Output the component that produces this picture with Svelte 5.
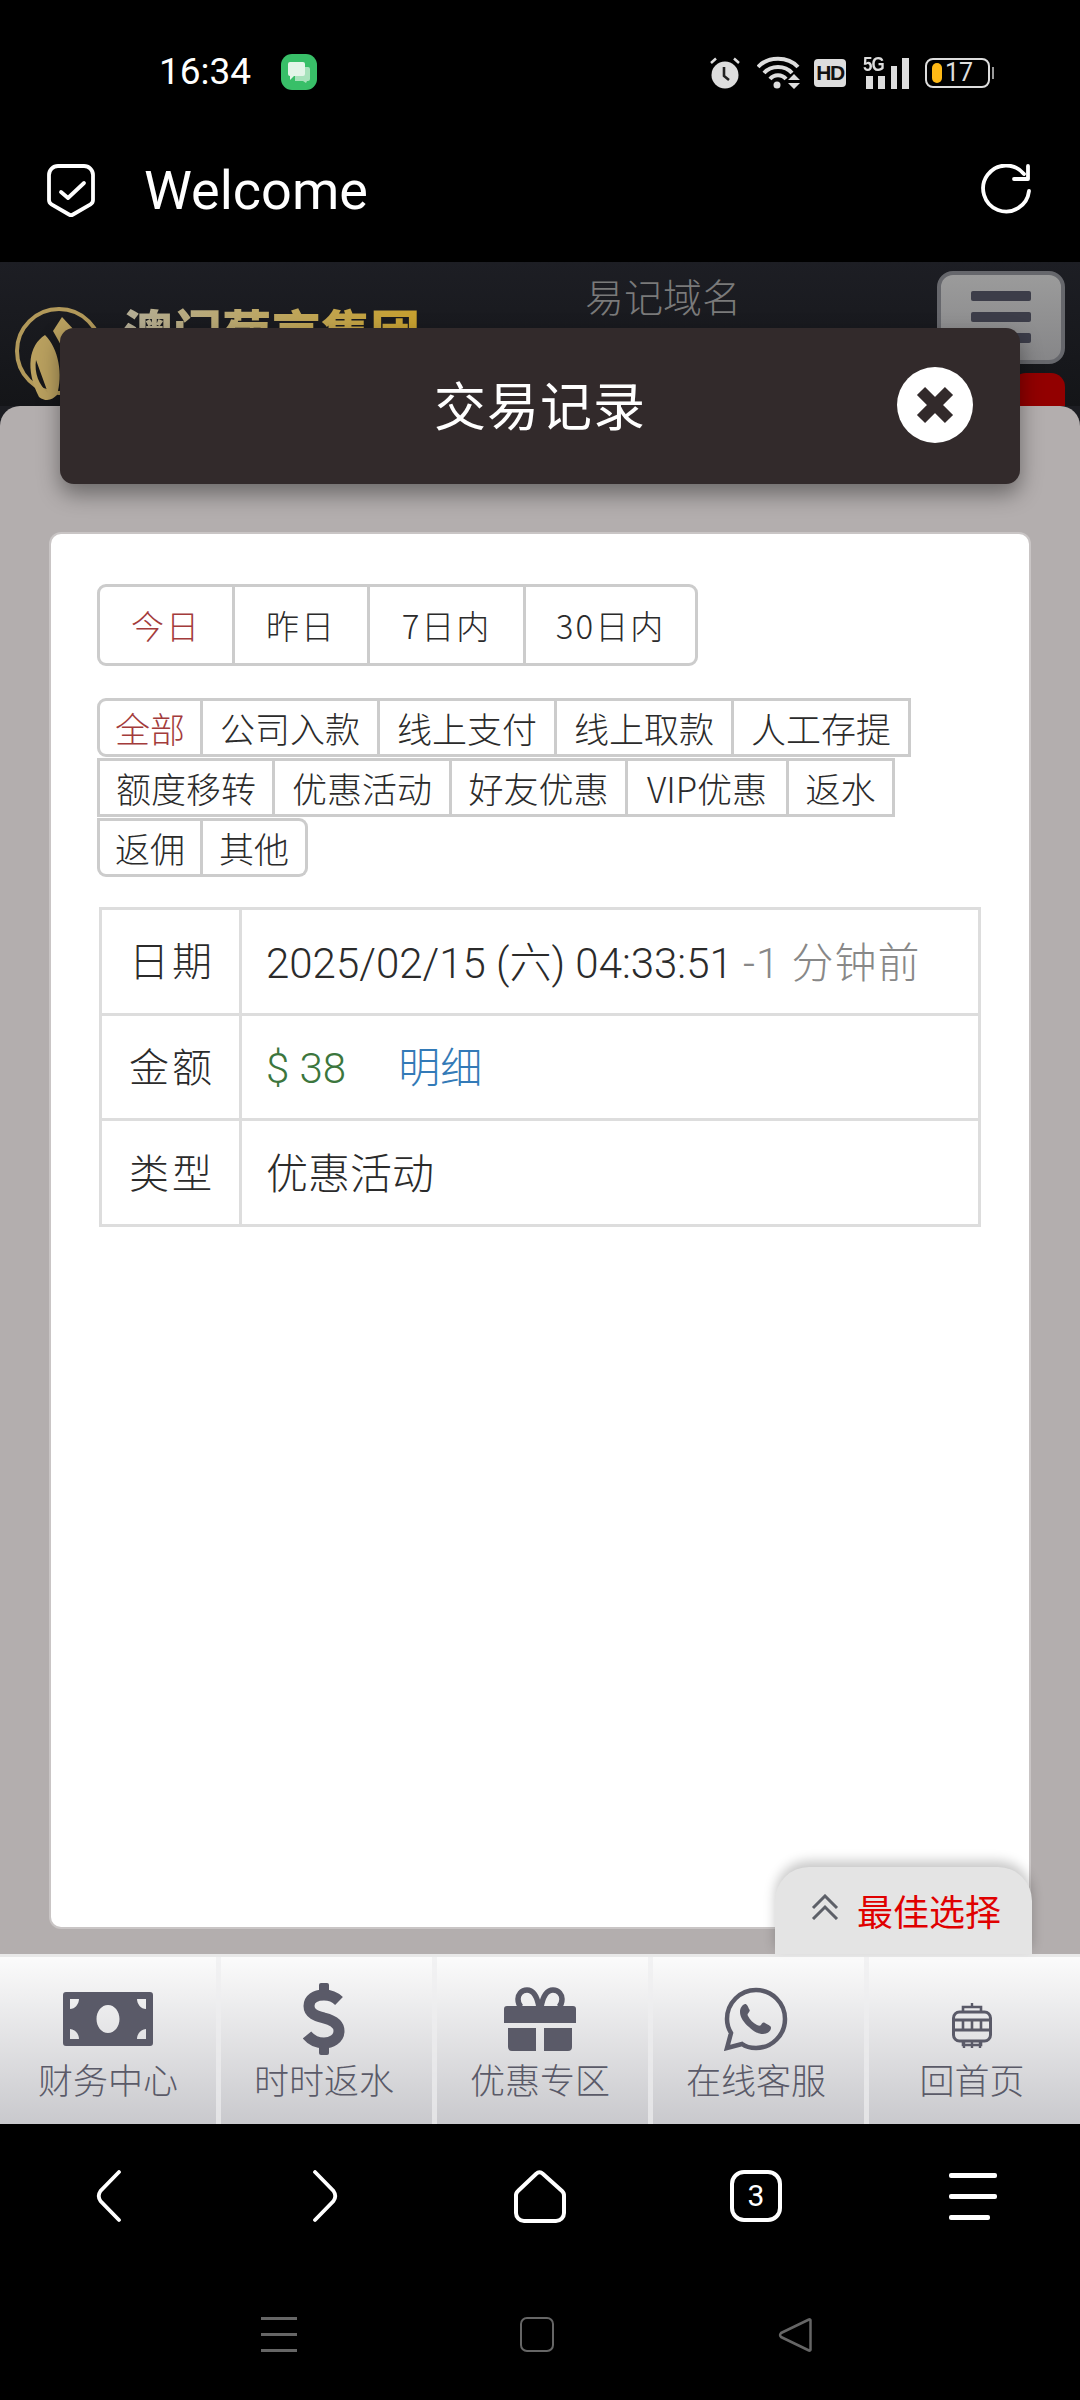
<script>
  const ranges = [
    { label: '今日', w: 132, active: true },
    { label: '昨日', w: 135 },
    { label: '7日内', w: 156 },
    { label: '30日内', w: 172 }
  ];
  const rows = [
    [['全部', 106, true], ['公司入款', 177], ['线上支付', 177], ['线上取款', 177], ['人工存提', 177]],
    [['额度移转', 178], ['优惠活动', 177], ['好友优惠', 176], ['VIP优惠', 161], ['返水', 106]],
    [['返佣', 106], ['其他', 105]]
  ];
  const nav = [
    { label: '财务中心', icon: 'money' },
    { label: '时时返水', icon: 'dollar' },
    { label: '优惠专区', icon: 'gift' },
    { label: '在线客服', icon: 'chat' },
    { label: '回首页', icon: 'lantern' }
  ];
</script>

<div class="screen">
  <div class="status">
    <span class="time">16:34</span>
    <svg class="msg" viewBox="0 0 36 36">
      <rect width="36" height="36" rx="11" fill="#38bf68" />
      <path d="M14 13h13a2 2 0 0 1 2 2v10a2 2 0 0 1-2 2h-1l-1 2-3-2h-8z" fill="#a7e2bb" />
      <path d="M9 8h13a2 2 0 0 1 2 2v10a2 2 0 0 1-2 2H13l-4 4v-4a2 2 0 0 1-2-2V10a2 2 0 0 1 2-2z" fill="#e3f5e8" />
    </svg>
    <div class="status-right">
      <svg class="s-alarm" viewBox="0 0 30 33">
        <circle cx="15" cy="19" r="13.5" fill="#ddd" />
        <path d="M14 11v9l5 4" fill="none" stroke="#222" stroke-width="2.6" />
        <path d="M1 7 6 2.500M29 7 24 2.500" stroke="#ddd" stroke-width="2.500" />
      </svg>
      <svg class="s-wifi" viewBox="0 0 44 33">
        <path d="M1 11C11 0 31 0 41 11M7 17C14 9 28 9 35 17M13 23C17 18 25 18 29 23" fill="none" stroke="#ddd" stroke-width="4" />
        <circle cx="20" cy="29" r="3.500" fill="#ddd" />
        <path d="M31 24h12l-6-6zM31 27h12l-6 6z" fill="#ddd" />
      </svg>
      <span class="s-hd">HD</span>
      <div class="s-signal">
        <span class="s-5g">5G</span>
        <svg viewBox="0 0 47 33">
          <path d="M3 20h7v13H3zM15 20h7v13h-7zM28 10h6v23h-6zM39 2h7v31h-7z" fill="#ddd" />
        </svg>
      </div>
      <div class="s-batt"><i></i><span>17</span></div>
      <b class="s-nub"></b>
    </div>
  </div>

  <div class="titlebar">
    <svg class="shield" viewBox="0 0 50 55">
      <path d="M12 3h26a9 9 0 0 1 9 9v25a5 5 0 0 1-2.500 4.300L27 51.500a4 4 0 0 1-4 0L5.500 41.300A5 5 0 0 1 3 37V12a9 9 0 0 1 9-9z" fill="none" stroke="#fff" stroke-width="3.800" />
      <path d="m15 29 7 6 16-15" fill="none" stroke="#fff" stroke-width="3.800" stroke-linecap="round" stroke-linejoin="round" />
    </svg>
    <span class="welcome">Welcome</span>
    <svg class="refresh" viewBox="0 0 50 50">
      <path d="M43 10A23 23 0 1 0 48 27" fill="none" stroke="#fff" stroke-width="3.800" stroke-linecap="round" />
      <path d="M33 15 47 15 47 2" fill="none" stroke="#fff" stroke-width="3.800" stroke-linecap="round" stroke-linejoin="round" />
    </svg>
  </div>

  <div class="web">
    <div class="site-head">
      <div class="logo">
        <svg class="logo-mark" viewBox="0 0 88 99">
          <circle cx="44" cy="44" r="42" fill="none" stroke="#b2995a" stroke-width="4" />
          <path d="M47 10 60 24 47 40 38 24z" fill="#b9a05f" />
          <path fill-rule="evenodd" d="M30 28C14 38 10 62 24 90 32 96 38 92 42 88 48 68 44 42 30 28zM21 53 33 86C24 78 19 66 21 53z" fill="#b9a05f" />
        </svg>
        <span class="logo-text">澳门葡京集团</span>
      </div>
      <div class="head-title">易记域名</div>
      <div class="head-right">
        <div class="burger"><i></i><i></i><i></i></div>
        <div class="red"></div>
      </div>
    </div>

    <div class="sheet">
      <div class="modal-head">
        <h1>交易记录</h1>
        <button class="close" aria-label="关闭">
          <svg viewBox="0 0 40 40">
            <path d="M6 6 34 34M34 6 6 34" stroke="#322a2b" stroke-width="11.500" />
          </svg>
        </button>
      </div>

      <div class="card">
        <div class="ranges">
          {#each ranges as r}
            <span class="range" class:on={r.active} style="width:{r.w}px">{r.label}</span>
          {/each}
        </div>

        <div class="types">
          {#each rows as row, i}
            <div class="type-row" class:first={i === 0} class:last={i === rows.length - 1}>
              {#each row as c}
                <span class="type" class:on={c[2]} style="width:{c[1]}px">{c[0]}</span>
              {/each}
            </div>
          {/each}
        </div>

        <table>
          <tbody>
            <tr>
              <th>日期</th>
              <td>2025/02/15 (六) 04:33:51 <span class="ago">-1 分钟前</span></td>
            </tr>
            <tr>
              <th>金额</th>
              <td><span class="amount">$ 38</span><a href="#detail" class="detail">明细</a></td>
            </tr>
            <tr>
              <th>类型</th>
              <td>优惠活动</td>
            </tr>
          </tbody>
        </table>
      </div>

      <div class="best">
        <svg viewBox="0 0 28 26">
          <path d="M2 14 14 2l12 12M2 25 14 13l12 12" fill="none" stroke="#5d6068" stroke-width="3" />
        </svg>
        <span>最佳选择</span>
      </div>
    </div>

    <div class="tabbar">
      {#each nav as n}
        <div class="tab">
          <div class="tab-icon">
            {#if n.icon === 'money'}
              <svg width="90" height="54" viewBox="0 0 90 54">
                <path fill-rule="evenodd" d="M3 0h84a3 3 0 0 1 3 3v48a3 3 0 0 1-3 3H3a3 3 0 0 1-3-3V3a3 3 0 0 1 3-3zM45 13c-6.400 0-11.500 6.300-11.500 14S38.600 41 45 41s11.500-6.300 11.500-14S51.400 13 45 13zM7 7v10c5 0 9-5 9-10zM83 7h-9c0 5 4 10 9 10zM7 37v10h9c0-5-4-10-9-10zM83 37c-5 0-9 5-9 10h9z" fill="#5a5a68" />
              </svg>
            {:else if n.icon === 'dollar'}
              <svg width="42" height="72" viewBox="0 0 42 72">
                <rect x="16" width="10" height="14" rx="2" fill="#5a5a68" />
                <rect x="16" y="58" width="10" height="14" rx="2" fill="#5a5a68" />
                <path d="M36 18C31 13 26 12 21 12 12 12 6 16 6 23 6 31 14 33 21 35 29 37 36 40 36 48 36 56 28 60 21 60 15 60 9 58 4 52" fill="none" stroke="#5a5a68" stroke-width="11" />
              </svg>
            {:else if n.icon === 'gift'}
              <svg width="72" height="64" viewBox="0 0 72 64">
                <path d="M35 20C33 9 29 3 23 3c-6 0-9 5-9 9 0 4 1 6 3 8M37 20C39 9 43 3 49 3c6 0 9 5 9 9 0 4-1 6-3 8" fill="none" stroke="#5a5a68" stroke-width="5.500" />
                <path d="M3 19h66a3 3 0 0 1 3 3v14H0V22a3 3 0 0 1 3-3zM4 41h28v23H8a4 4 0 0 1-4-4zM40 41h28v19a4 4 0 0 1-4 4H40z" fill="#5a5a68" />
              </svg>
            {:else if n.icon === 'chat'}
              <svg width="64" height="64" viewBox="0 0 64 64">
                <path d="M3 61 7 46C4 41 3 37 3 32 3 16 16 3 32 3s29 13 29 29-13 29-29 29c-5 0-10-1-14-4z" fill="none" stroke="#5a5a68" stroke-width="4.500" stroke-linejoin="miter" />
                <path d="M21 17c-3 1-5 4-5 8 0 5 4 11 9 15 5 5 10 7 14 7 4 0 8-3 8-6 0-2-1-2-6-5-2-1-3 0-4 2-1 1-2 1-4 0-4-2-7-5-9-9-1-2 0-2 1-4 1-1 1-2 0-3-2-5-3-5-4-5z" fill="#5a5a68" />
              </svg>
            {:else}
              <svg class="lantern" width="40" height="45" viewBox="0 0 40 45">
                <path d="M20 0v4M12 38v7M20 38v7M28 38v7" stroke="#5a5a68" stroke-width="2.400" />
                <path d="M11 9V4h18v5M11 38v4h18v-4" fill="none" stroke="#5a5a68" stroke-width="2.600" />
                <rect x="1.500" y="9" width="37" height="29" rx="6" fill="none" stroke="#5a5a68" stroke-width="3" />
                <path d="M2 17h36M2 27h36" stroke="#5a5a68" stroke-width="3" />
                <path d="M11 17v10M20 17v10M29 17v10" stroke="#5a5a68" stroke-width="2.600" />
              </svg>
            {/if}
          </div>
          <span>{n.label}</span>
        </div>
      {/each}
    </div>
  </div>

  <div class="browser-nav">
    <svg class="b-ico" width="60" height="60" viewBox="0 0 60 60">
      <path d="M40 2 21.500 21Q18 26 21.500 31L40 50" fill="none" stroke="#fff" stroke-width="3.800" stroke-linecap="round" />
    </svg>
    <svg class="b-ico" width="60" height="60" viewBox="0 0 60 60">
      <path d="M19 2 37.500 21Q41 26 37.500 31L19 50" fill="none" stroke="#fff" stroke-width="3.800" stroke-linecap="round" />
    </svg>
    <svg class="b-ico" width="60" height="60" viewBox="0 0 60 60">
      <path d="M24.500 3.500a4 4 0 0 1 6 0L50 21a6 6 0 0 1 2 5v17a8 8 0 0 1-8 8H12a8 8 0 0 1-8-8V26a6 6 0 0 1 2-5z" fill="none" stroke="#fff" stroke-width="4" stroke-linejoin="round" />
    </svg>
    <div class="b-count">3</div>
    <div class="b-menu"><i></i><i></i><i></i></div>
  </div>

  <div class="sys-nav">
    <div class="sys-menu"><i></i><i></i><i></i></div>
    <div class="sys-square"></div>
    <svg width="34" height="36" viewBox="0 0 34 36">
      <path d="M31 2.500a1 1 0 0 1 1.500 1v29a1 1 0 0 1-1.500 1L3 20a3 3 0 0 1 0-4z" fill="none" stroke="#666" stroke-width="2.500" stroke-linejoin="round" />
    </svg>
  </div>
</div>

<style>
  :global(body) {
    margin: 0;
    background: #000;
  }
  .screen {
    width: 1080px;
    height: 2400px;
    display: flex;
    flex-direction: column;
    background: #000;
    overflow: hidden;
    font-family: "Noto Sans CJK SC", sans-serif;
    font-weight: 300;
  }

  .status {
    height: 92px;
    padding: 0 86px 0 159px;
    box-sizing: border-box;
    display: flex;
    align-items: flex-end;
  }
  .time {
    font: 400 37px/36px Roboto, sans-serif;
    color: #fff;
    width: 122px;
    padding-bottom: 2px;
  }
  .msg {
    width: 36px;
    height: 36px;
    margin-bottom: 2px;
  }
  .status-right {
    margin-left: auto;
    display: flex;
    align-items: flex-end;
    padding-bottom: 3px;
  }
  .s-alarm {
    width: 30px;
    height: 33px;
  }
  .s-wifi {
    width: 44px;
    height: 33px;
    margin-left: 17px;
  }
  .s-hd {
    width: 32px;
    height: 28px;
    margin-left: 13px;
    margin-bottom: 2px;
    background: #ddd;
    color: #111;
    border-radius: 4px;
    font: 700 21px/28px "Liberation Sans", sans-serif;
    text-align: center;
    letter-spacing: -1.500px;
  }
  .s-signal {
    position: relative;
    width: 47px;
    height: 33px;
    margin-left: 17px;
  }
  .s-signal svg {
    width: 47px;
    height: 33px;
    display: block;
  }
  .s-5g {
    position: absolute;
    left: 0;
    top: -2px;
    font: 700 20px/20px "Liberation Sans", sans-serif;
    color: #ddd;
    letter-spacing: -1px;
    transform: scaleX(0.85);
    transform-origin: left;
  }
  .s-batt {
    width: 65px;
    height: 30px;
    box-sizing: border-box;
    margin-left: 15px;
    margin-bottom: 1px;
    border: 2px solid #ddd;
    border-radius: 8px;
    display: flex;
    align-items: center;
    padding-left: 5px;
  }
  .s-batt i {
    width: 10px;
    height: 20px;
    background: #ffb915;
    border-radius: 5px;
  }
  .s-batt span {
    font: 400 25px/26px Roboto, sans-serif;
    color: #ddd;
    margin-left: 3px;
  }
  .s-nub {
    width: 2px;
    height: 12px;
    margin: 0 0 10px 2px;
    background: #999;
  }

  .titlebar {
    height: 170px;
    box-sizing: border-box;
    padding: 71px 49px 0 46px;
    display: flex;
    align-items: flex-start;
  }
  .shield {
    width: 50px;
    height: 55px;
  }
  .welcome {
    margin-left: 48px;
    margin-top: -3px;
    font: 400 54px/62px Roboto, sans-serif;
    color: #fff;
  }
  .refresh {
    margin-left: auto;
    margin-top: 1px;
    width: 50px;
    height: 50px;
  }

  .web {
    position: relative;
    height: 1862px;
    display: flex;
    flex-direction: column;
    background: #1c1d22;
  }
  .site-head {
    height: 144px;
    display: flex;
    background: linear-gradient(#1d1e24, #141518);
    overflow: hidden;
  }
  .logo {
    width: 585px;
    display: flex;
    padding: 45px 0 0 15px;
    box-sizing: border-box;
  }
  .logo-mark {
    width: 88px;
    height: 99px;
    flex: none;
  }
  .logo-text {
    margin-left: 20px;
    margin-top: -6px;
    height: 60px;
    font: 900 49.500px/60px "Noto Sans CJK SC", sans-serif;
    background: linear-gradient(90deg, #b3ad96, #c7a02e);
    -webkit-background-clip: text;
    background-clip: text;
    color: transparent;
    white-space: nowrap;
  }
  .head-title {
    width: 352px;
    padding-top: 8px;
    font-size: 39px;
    line-height: 50px;
    color: #7a7a7a;
    white-space: nowrap;
  }
  .head-right {
    padding-top: 9px;
  }
  .burger {
    width: 128px;
    height: 93px;
    box-sizing: border-box;
    border: 4px solid #66676c;
    border-radius: 16px;
    background: linear-gradient(#9b9b9b, #868688);
    padding: 16px 30px 0 30px;
    display: flex;
    flex-direction: column;
    gap: 11px;
  }
  .burger i {
    height: 10px;
    background: #3c3d49;
    border-radius: 2px;
  }
  .red {
    width: 53px;
    height: 40px;
    margin: 9px 0 0 75px;
    background: #920000;
    border-radius: 14px 14px 0 0;
  }

  .sheet {
    position: relative;
    flex: 1;
    background: #b3aeae;
    border-radius: 20px 20px 0 0;
    padding: 128px 51px 0;
    box-sizing: border-box;
  }
  .modal-head {
    position: absolute;
    left: 60px;
    right: 60px;
    top: -78px;
    height: 156px;
    background: #322a2b;
    border-radius: 14px;
    box-shadow: 0 10px 22px rgba(0, 0, 0, 0.4);
    display: flex;
    align-items: center;
    justify-content: center;
  }
  .modal-head h1 {
    margin: -5px 0 0;
    font-size: 52px;
    font-weight: 400;
    color: #fff;
    letter-spacing: 1px;
  }
  .close {
    position: absolute;
    left: 837px;
    top: 39px;
    width: 76px;
    height: 76px;
    padding: 18px;
    border: 0;
    border-radius: 50%;
    background: #fff;
  }
  .close svg {
    display: block;
    width: 40px;
    height: 40px;
  }

  .card {
    height: 1393px;
    box-sizing: border-box;
    background: #fff;
    border-radius: 10px;
    box-shadow: 0 0 0 2px #c9c5c5;
    padding: 50px 0 0 46px;
    color: #2b2b2b;
  }
  .ranges {
    display: inline-flex;
    border: 3px solid #ccc;
    border-radius: 9px;
    height: 82px;
    box-sizing: border-box;
  }
  .range {
    display: flex;
    align-items: center;
    justify-content: center;
    font-size: 33px;
    box-sizing: border-box;
    border-left: 3px solid #ccc;
    letter-spacing: 2px;
  }
  .range:first-child {
    border-left: 0;
  }
  .range.on,
  .type.on {
    color: #a33b3b;
  }
  .types {
    margin-top: 32px;
  }
  .type-row {
    display: flex;
    height: 59px;
    margin-bottom: 1px;
  }
  .type {
    display: flex;
    align-items: center;
    justify-content: center;
    box-sizing: border-box;
    font-size: 35px;
    white-space: nowrap;
    border: 3px solid #ccc;
    border-left-width: 0;
    height: 59px;
  }
  .type:first-child {
    border-left-width: 3px;
  }
  .first .type:first-child {
    border-top-left-radius: 9px;
    border-bottom-left-radius: 9px;
  }
  .last .type:last-child {
    border-top-right-radius: 9px;
    border-bottom-right-radius: 9px;
  }
  .last .type:first-child {
    border-bottom-left-radius: 9px;
  }

  table {
    margin: 30px 0 0 2px;
    width: 882px;
    height: 320px;
    border-collapse: collapse;
    table-layout: fixed;
    font-size: 42px;
  }
  th,
  td {
    border: 3px solid #ddd;
    font-weight: 300;
    white-space: nowrap;
    padding-bottom: 5px;
  }
  th {
    width: 132px;
    padding-left: 4px;
    text-align: center;
    font-size: 40px;
    letter-spacing: 3px;
  }
  td {
    padding-left: 24px;
  }
  td,
  .ago,
  .amount {
    font-family: Roboto, "Noto Sans CJK SC", sans-serif;
    font-weight: 300;
  }
  .ago {
    color: #888;
    letter-spacing: 1px;
  }
  .amount {
    color: #3c763d;
  }
  .detail {
    margin-left: 52px;
    color: #337ab7;
    text-decoration: none;
  }

  .best {
    position: absolute;
    right: 48px;
    bottom: 0;
    width: 257px;
    height: 87px;
    box-sizing: border-box;
    padding: 21px 0 0 36px;
    background: #e4e4e4;
    border-radius: 34px 34px 0 0;
    box-shadow: 0 -6px 12px rgba(0, 0, 0, 0.22);
    display: flex;
    gap: 18px;
    color: #e00000;
    font-size: 36px;
    line-height: 44px;
    font-weight: 400;
    white-space: nowrap;
  }
  .best svg {
    width: 28px;
    height: 26px;
    margin-top: 6px;
  }

  .tabbar {
    height: 170px;
    flex: none;
    display: flex;
    border-top: 3px solid #e8e8e8;
    box-sizing: border-box;
  }
  .tab {
    flex: 0 0 216px;
    display: flex;
    flex-direction: column;
    align-items: center;
    background: linear-gradient(#fbfbfb, #c9c9cd);
    box-shadow: inset 5px 0 0 rgba(238, 238, 240, 0.7);
    color: #5a5a68;
    font-size: 35px;
    white-space: nowrap;
  }
  .tab:first-child {
    box-shadow: none;
  }
  .tab-icon {
    height: 98px;
    padding-top: 26px;
    box-sizing: border-box;
    display: flex;
    align-items: center;
  }
  .lantern {
    margin-top: 12px;
  }
  .tab span {
    line-height: 48px;
  }

  .browser-nav {
    height: 152px;
    display: grid;
    grid-template-columns: 217px 217px 216px 216px 214px;
    justify-items: center;
    padding-top: 46px;
    box-sizing: border-box;
  }
  .b-count {
    width: 52px;
    height: 52px;
    margin-left: -4px;
    box-sizing: border-box;
    border: 4px solid #fff;
    border-radius: 14px;
    color: #fff;
    font: 400 30px/44px Roboto, sans-serif;
    text-align: center;
  }
  .b-menu {
    width: 48px;
    padding-top: 3px;
    display: flex;
    flex-direction: column;
    gap: 16px;
  }
  .b-menu i {
    height: 5px;
    background: #fff;
    border-radius: 2px;
  }
  .b-menu i:last-child {
    width: 41px;
  }

  .sys-nav {
    flex: 1;
    display: flex;
    align-items: flex-start;
    padding: 41px 0 0 261px;
    box-sizing: border-box;
    gap: 0;
  }
  .sys-menu {
    width: 36px;
    display: flex;
    flex-direction: column;
    gap: 13px;
    margin-right: 223px;
  }
  .sys-menu i {
    height: 3px;
    background: #666;
  }
  .sys-square {
    width: 34px;
    height: 35px;
    box-sizing: border-box;
    border: 2.500px solid #666;
    border-radius: 7px;
    margin-right: 224px;
  }
</style>
